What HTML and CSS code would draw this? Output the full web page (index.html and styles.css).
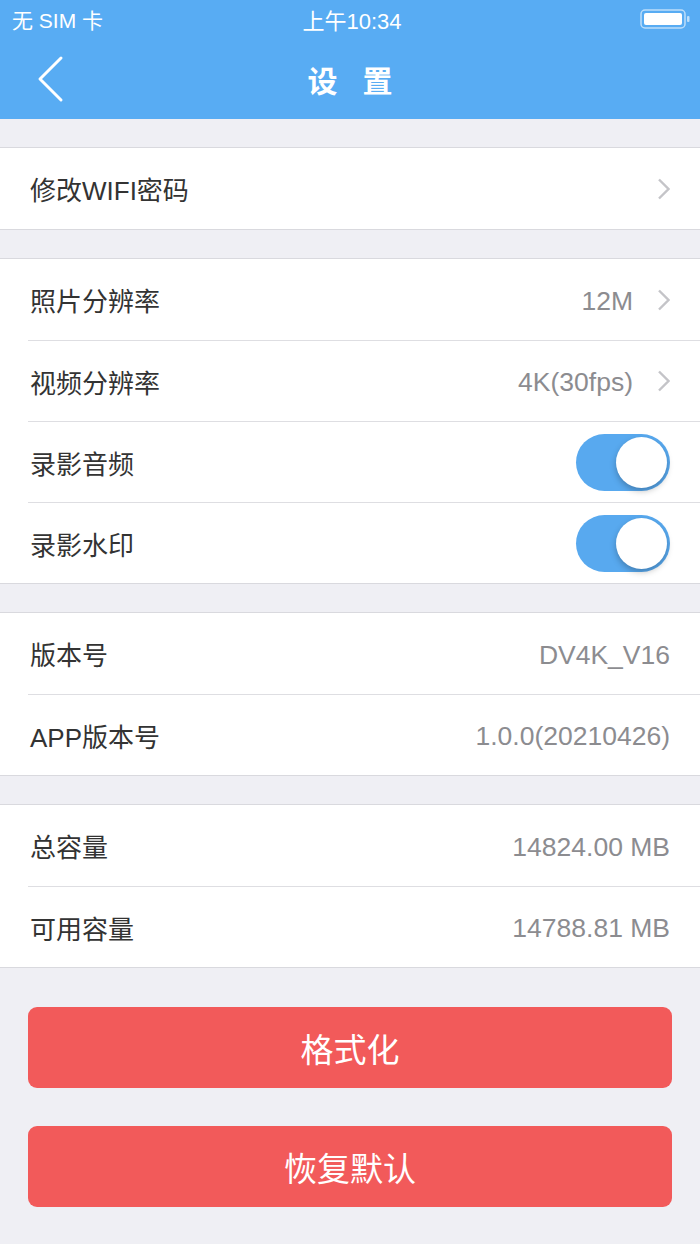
FILE: index.html
```html
<!DOCTYPE html>
<html lang="zh-CN">

    <head>
        <meta charset="UTF-8">
        <meta name="viewport" content="width=device-width, initial-scale=1.0">
        <title>设置</title>
        <link rel="stylesheet" href="styles.css">
    </head>

    <body>
        <header class="topbar">
            <div class="status">
                <span class="carrier">无 SIM 卡</span>
                <span class="clock">上午10:34</span>
                <span class="battery">
                    <svg width="52" height="20" viewBox="0 0 52 20">
                        <rect x="1" y="1" width="44" height="18" rx="4" fill="none" stroke="rgba(255,255,255,0.6)" stroke-width="1.5"/>
                        <rect x="4" y="4" width="38" height="12" rx="2" fill="#fff"/>
                        <rect x="47" y="7" width="2.5" height="6" rx="1" fill="rgba(255,255,255,0.6)"/>
                    </svg>
                </span>
            </div>
            <div class="nav">
                <a class="back" href="#">
                    <svg width="30" height="48" viewBox="0 0 30 48">
                        <polyline points="25,3 4,24 25,45" fill="none" stroke="#fff" stroke-width="3" stroke-linecap="round" stroke-linejoin="round"/>
                    </svg>
                </a>
                <h1 class="title"><span>设</span><span>置</span></h1>
            </div>
        </header>

        <main>
            <section class="group">
                <div class="row">
                    <span class="label">修改WIFI密码</span>
                    <span class="chevron"></span>
                </div>
            </section>

            <section class="group">
                <div class="row">
                    <span class="label">照片分辨率</span>
                    <span class="value">12M</span>
                    <span class="chevron"></span>
                </div>
                <div class="row">
                    <span class="label">视频分辨率</span>
                    <span class="value">4K(30fps)</span>
                    <span class="chevron"></span>
                </div>
                <div class="row">
                    <span class="label">录影音频</span>
                    <span class="switch on"><span class="knob"></span></span>
                </div>
                <div class="row">
                    <span class="label">录影水印</span>
                    <span class="switch on"><span class="knob"></span></span>
                </div>
            </section>

            <section class="group">
                <div class="row">
                    <span class="label">版本号</span>
                    <span class="value">DV4K_V16</span>
                </div>
                <div class="row">
                    <span class="label">APP版本号</span>
                    <span class="value">1.0.0(20210426)</span>
                </div>
            </section>

            <section class="group">
                <div class="row">
                    <span class="label">总容量</span>
                    <span class="value">14824.00 MB</span>
                </div>
                <div class="row">
                    <span class="label">可用容量</span>
                    <span class="value">14788.81 MB</span>
                </div>
            </section>

            <div class="actions">
                <button class="btn">格式化</button>
                <button class="btn">恢复默认</button>
            </div>
        </main>
    </body>

</html>
```

FILE: styles.css
```css
body {
    font-family: "Liberation Sans", "Noto Sans CJK SC", sans-serif;
    background-color: #efeff4;
    margin: 0;
    width: 700px;
    height: 1244px;
    overflow: hidden;
}

.topbar {
    background: #58acf3;
    color: #fff;
    height: 119px;
}

.status {
    height: 38px;
    display: grid;
    grid-template-columns: 1fr auto 1fr;
    align-items: center;
    padding: 0 8px 2px 12px;
    font-size: 21px;
}

.clock {
    font-size: 22px;
}

.battery {
    justify-self: end;
    display: flex;
}

.nav {
    height: 79px;
    display: flex;
    align-items: center;
    justify-content: center;
    position: relative;
}

.back {
    position: absolute;
    left: 36px;
    top: 15px;
    display: flex;
}

.title {
    margin: 0 0 2px 0;
    font-size: 30px;
    font-weight: bold;
    display: flex;
    gap: 25px;
    font-family: "Noto Sans CJK SC", sans-serif;
}

.group {
    background: #fff;
    border-top: 1px solid #d9d9de;
    border-bottom: 1px solid #d9d9de;
    margin-top: 28px;
}

.row {
    height: 81px;
    box-sizing: border-box;
    display: flex;
    align-items: center;
    padding: 0 30px 0 0;
    margin-left: 28px;
}

.row + .row {
    border-top: 1px solid #dedee2;
}

.label {
    flex: 1;
    font-size: 26px;
    color: #333;
    padding-left: 2px;
}

.value {
    font-size: 26.5px;
    color: #8c8c90;
    padding-top: 3px;
}

.chevron {
    width: 13px;
    height: 22px;
    margin-left: 24px;
    background: url("data:image/svg+xml;utf8,<svg xmlns='http://www.w3.org/2000/svg' width='13' height='22' viewBox='0 0 13 22'><polyline points='2,1.5 11.5,11 2,20.5' fill='none' stroke='%23c4c4c8' stroke-width='2.4'/></svg>") no-repeat;
}

.switch {
    width: 94px;
    height: 57px;
    border-radius: 29px;
    background: #58a9ef;
    position: relative;
}

.knob {
    position: absolute;
    right: 3px;
    top: 3px;
    width: 51px;
    height: 51px;
    border-radius: 50%;
    background: #fff;
    box-shadow: 0 3px 6px rgba(0, 0, 0, 0.25);
}

.actions {
    display: flex;
    flex-direction: column;
    gap: 38px;
    padding: 39px 28px 0 28px;
}

.btn {
    height: 81px;
    border: none;
    border-radius: 9px;
    background: #f25a5a;
    color: #fff;
    font-size: 33px;
    font-family: "Noto Sans CJK SC", sans-serif;
    cursor: pointer;
}
```
